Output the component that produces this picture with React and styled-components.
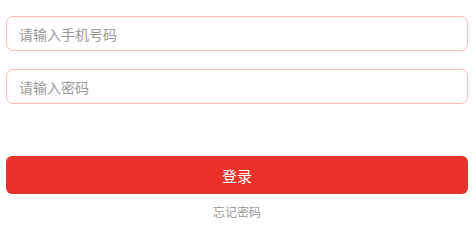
import React from 'react';
import styled, { createGlobalStyle } from 'styled-components';

const GlobalStyle = createGlobalStyle`
  body {
    margin: 0;
    background: #fff;
    font-family: "Noto Sans CJK SC", "Noto Sans", sans-serif;
  }
`;

const Page = styled.div`
  padding: 16px 8px 0 6px;
  display: flex;
  flex-direction: column;
`;

const Field = styled.input`
  box-sizing: border-box;
  width: 100%;
  height: 35px;
  margin-bottom: 18px;
  padding: 0 12px;
  border: 1px solid #ffbab4;
  border-radius: 7px;
  outline: none;
  font-family: inherit;
  font-size: 14px;
  color: #333;
  background: #fff;

  &::placeholder {
    color: #9a9a9a;
  }
`;

const SubmitButton = styled.button`
  box-sizing: border-box;
  width: 100%;
  height: 38px;
  margin-top: 34px;
  border: none;
  border-radius: 6px;
  background-color: #e83228;
  color: #fff;
  font-family: inherit;
  font-size: 15px;
  cursor: pointer;
`;

const ForgotLink = styled.a`
  align-self: center;
  margin-top: 9px;
  font-size: 12px;
  color: #999;
  text-decoration: none;
  line-height: 17px;
`;

function App() {
  return (
    <>
      <GlobalStyle />
      <Page>
        <Field type="tel" placeholder="请输入手机号码" />
        <Field type="password" placeholder="请输入密码" />
        <SubmitButton>登录</SubmitButton>
        <ForgotLink href="#">忘记密码</ForgotLink>
      </Page>
    </>
  );
}

export default App;
